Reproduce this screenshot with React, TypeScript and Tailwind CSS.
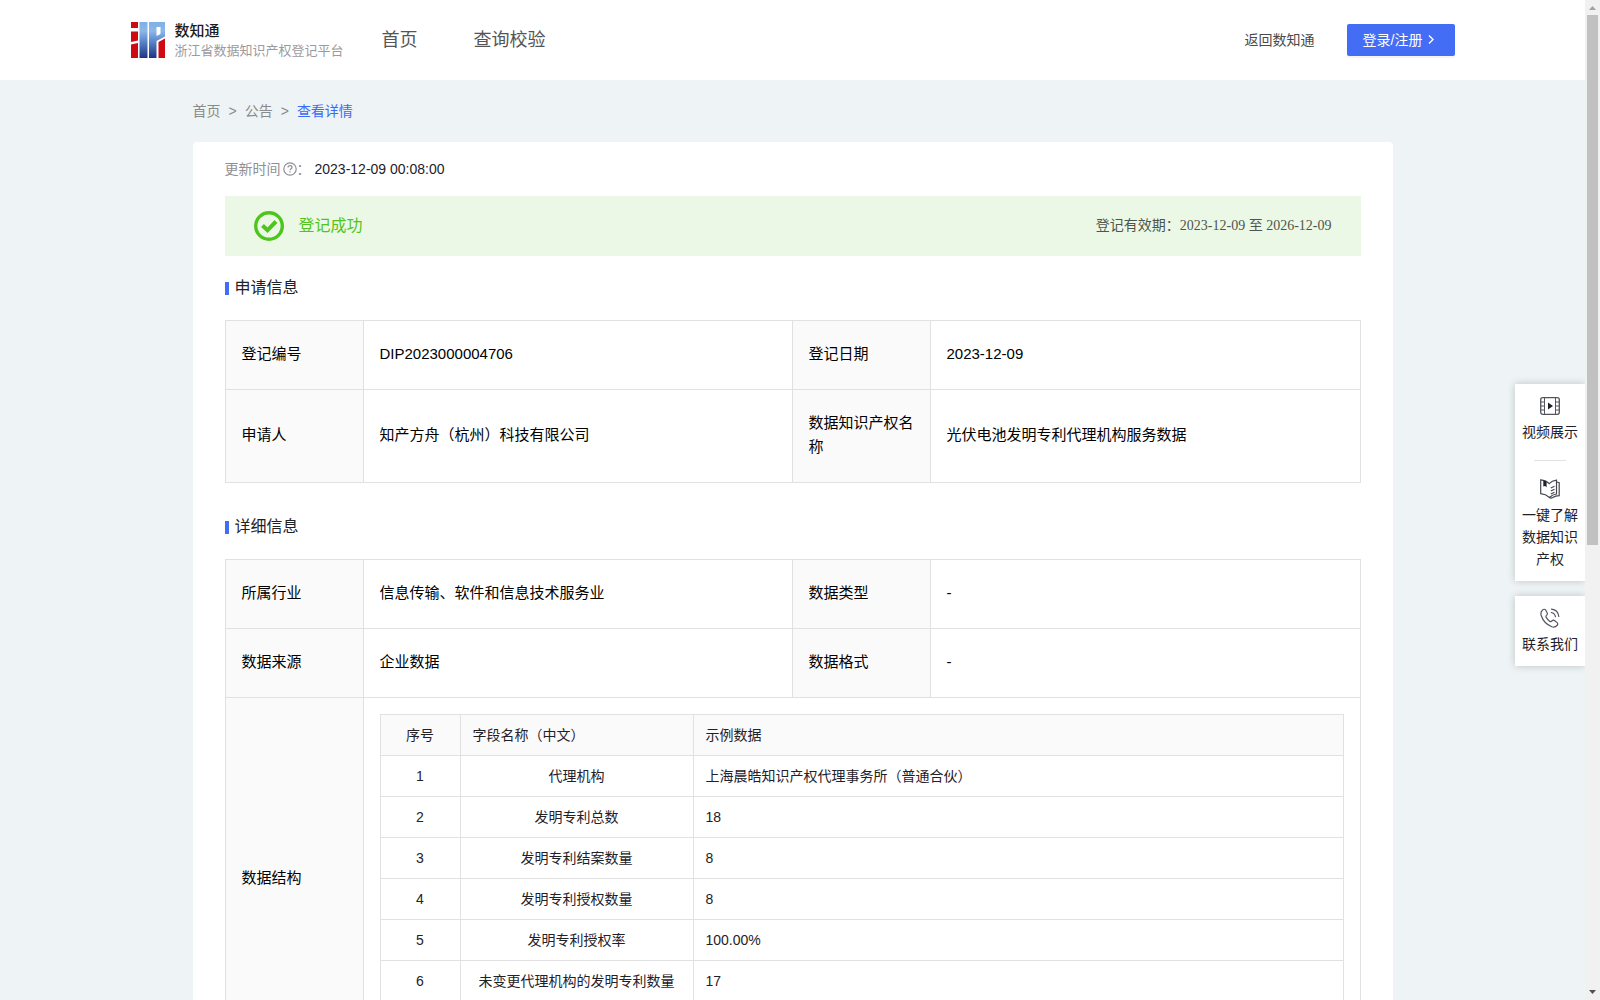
import type { ReactNode } from "react";

const cell = "border border-[#e1e1e1]";
const labelCell = "border border-[#e1e1e1] bg-[#fafafa] px-4 pb-[23px] pt-[21px] text-left align-middle font-normal";
const valueCell = "border border-[#e1e1e1] px-4 pb-[23px] pt-[21px] align-middle";

const fields = [
  ["1", "代理机构", "上海晨皓知识产权代理事务所（普通合伙）"],
  ["2", "发明专利总数", "18"],
  ["3", "发明专利结案数量", "8"],
  ["4", "发明专利授权数量", "8"],
  ["5", "发明专利授权率", "100.00%"],
  ["6", "未变更代理机构的发明专利数量", "17"],
];

function Logo() {
  return (
    <svg width="34" height="36" viewBox="0 0 34 36" aria-hidden="true">
      <defs>
        <linearGradient id="logoBlue" gradientUnits="userSpaceOnUse" x1="0" y1="0" x2="0" y2="36">
          <stop offset="0" stopColor="#7fb0e6" />
          <stop offset="0.25" stopColor="#8db7e8" />
          <stop offset="0.5" stopColor="#5f8ed0" />
          <stop offset="1" stopColor="#1d3385" />
        </linearGradient>
      </defs>
      <path fill="#cf0a12" d="M0 0h7v6H0zM0 9.500h7v9L0 20zM0 22.500L7 21v15H0z" />
      <path fill="url(#logoBlue)" d="M8.500 0h8v36h-8z" />
      <path fill="url(#logoBlue)" fillRule="evenodd" d="M18 0h16v14.500L25.500 19v17H18zM25.500 5v9l4-2V5z" />
      <path fill="#cf0a12" d="M27.500 20L34 16.500V36h-6.500z" />
    </svg>
  );
}

function VideoIcon() {
  return (
    <svg width="20" height="20" viewBox="0 0 20 20" fill="none" stroke="#54545c" aria-hidden="true">
      <rect x="0.7" y="1.700" width="18.600" height="16.600" rx="2" strokeWidth="1.300" />
      <path d="M4.500 2v16M15.500 2v16M1 6h3.500M1 10h3.500M1 14h3.500M15.500 6H19M15.500 10H19M15.500 14H19" />
      <path d="M8 6.500v7l5-3.500z" fill="#1f2129" stroke="none" />
    </svg>
  );
}

function BookIcon() {
  return (
    <svg width="20" height="20" viewBox="0 0 20 20" fill="none" stroke="#45464f" strokeWidth="1.200" aria-hidden="true">
      <path d="M9.200 4.600C7 2.300 4 1.200.7.900v13.800c3.400.3 6.200 1.500 8.800 3.800 1.900-2.100 4.200-3.200 7-3.500V1.200c-2.900.3-5.400 1.400-7.300 3.400z" />
      <path d="M16.700 3l2.500.6v13c-2.500 0-4.500.6-6.500 2-1.200.8-2.200.7-3.200-.1" />
      <path d="M10.800 9l3.700-1.700M10.800 12l3.700-1.700M10.800 15l3.700-1.700" />
      <path d="M3.300 1.200l3.300 1.100v6L5 7 3.300 7.500z" fill="#1f2129" stroke="none" />
    </svg>
  );
}

function PhoneIcon() {
  return (
    <svg width="20" height="20" viewBox="0 0 20 20" fill="none" stroke="#54545c" strokeWidth="1.200" strokeLinecap="round" aria-hidden="true">
      <path d="M5.800 2.200C4.800.9 3.600 1 2.400 2.200.9 3.600.5 5.200 1.200 7.500c1.700 5.300 5.500 9.200 10.600 11.200 2 .7 3.800.3 5.200-1.200 1-1.100 1-2.200-.1-3.100l-2.200-1.700c-1-.8-1.900-.6-2.900.3-.8.8-1.400.8-2.200.2-1.500-1.200-2.600-2.500-3.400-3.800-.5-.8-.4-1.400.3-2 1.100-1 1.200-1.900.5-2.900z" />
      <path d="M11.300 4.500c2.200.4 3.700 1.900 4.100 4.200M11.500 1.200c4.200.5 6.800 3.100 7.300 7.300" />
    </svg>
  );
}

function SectionTitle({ children }: { children: ReactNode }) {
  return (
    <h2 className="flex h-6 items-center text-base leading-6 text-[#1f2129]">
      <span className="mr-[6px] h-[13px] w-1 bg-[#446df6]" />
      {children}
    </h2>
  );
}

function Columns() {
  return (
    <colgroup>
      <col className="w-[138px]" />
      <col className="w-[429px]" />
      <col className="w-[138px]" />
      <col />
    </colgroup>
  );
}

function InfoRow({ items }: { items: [string, string, string, string] }) {
  return (
    <tr>
      <th scope="row" className={labelCell}>{items[0]}</th>
      <td className={valueCell}>{items[1]}</td>
      <th scope="row" className={labelCell}>{items[2]}</th>
      <td className={valueCell}>{items[3]}</td>
    </tr>
  );
}

function Header() {
  return (
    <header className="bg-white">
      <div className="mx-auto flex h-20 max-w-[1324px] items-center">
        <a href="#" className="flex items-center gap-[10px]">
          <Logo />
          <span className="flex flex-col pt-px">
            <span className="text-[15px] font-medium leading-5 text-[#1c1c1c]">数知通</span>
            <span className="text-[13px] leading-5 text-[#9b9b9f]">浙江省数据知识产权登记平台</span>
          </span>
        </a>
        <nav className="ml-[38px] flex gap-14 text-lg leading-6 text-[#555]">
          <a href="#">首页</a>
          <a href="#">查询校验</a>
        </nav>
        <a href="#" className="ml-auto text-sm text-[#4a4a4a]">返回数知通</a>
        <button className="ml-8 flex h-8 w-[108px] items-center rounded-[2px] bg-[#446df6] pl-4 text-sm text-white shadow-[0_2px_0_rgba(0,0,0,0.045)]">
          登录/注册
          <svg className="ml-[3px]" width="12" height="12" viewBox="0 0 12 12" fill="none" stroke="currentColor" strokeWidth="1.400" aria-hidden="true">
            <path d="M4 1.500L8 5.500l-4 4" />
          </svg>
        </button>
      </div>
    </header>
  );
}

function FloatingTools() {
  return (
    <aside className="absolute right-0 top-96 flex w-[70px] flex-col gap-[15px] text-center text-sm leading-[22px] text-[#1f2129]">
      <div className="flex flex-col items-center bg-white px-[7px] pb-[11px] pt-3 shadow-[0_0_8px_rgba(0,0,0,0.2)]">
        <a href="#" className="flex flex-col items-center gap-[5px]">
          <VideoIcon />
          视频展示
        </a>
        <hr className="mb-[18px] mt-[17px] w-8 border-[#e1e1e1]" />
        <a href="#" className="flex flex-col items-center gap-[5px]">
          <BookIcon />
          一键了解数据知识产权
        </a>
      </div>
      <a href="#" className="flex flex-col items-center gap-[5px] bg-white px-[7px] pb-[11px] pt-3 shadow-[0_0_8px_rgba(0,0,0,0.2)]">
        <PhoneIcon />
        联系我们
      </a>
    </aside>
  );
}

function ScrollTrack() {
  return (
    <div className="flex w-[15px] shrink-0 flex-col items-center bg-[#f1f1f1]" aria-hidden="true">
      <svg className="shrink-0" width="15" height="15" viewBox="0 0 15 15"><path d="M4 10h7L7.500 6z" fill="#a3a3a3" /></svg>
      <div className="h-[530px] w-[11px] bg-[#c1c1c1]" />
      <svg className="mt-auto shrink-0" width="15" height="15" viewBox="0 0 15 15"><path d="M4 5h7L7.500 9z" fill="#505050" /></svg>
    </div>
  );
}

export default function App() {
  return (
    <div className="flex h-screen font-['Liberation_Sans','Noto_Sans_CJK_SC',sans-serif]">
      <div className="relative min-w-0 flex-1 overflow-hidden bg-[#eef3f6]">
        <Header />
        <main className="mx-auto max-w-[1200px]">
          <nav className="flex h-[62px] items-center gap-2 pb-px text-sm text-[#8a8a8a]">
            <a href="#">首页</a>
            <span>&gt;</span>
            <a href="#">公告</a>
            <span>&gt;</span>
            <a href="#" className="text-[#3b6af5]">查看详情</a>
          </nav>
          <section className="rounded bg-white px-8 pb-8 pt-4">
            <p className="flex h-[22px] items-center text-sm text-[#8f9094]">
              更新时间
              <svg className="ml-[2px]" width="14" height="14" viewBox="0 0 14 14" fill="none" stroke="#8f9094" strokeWidth="1.200" aria-hidden="true">
                <circle cx="7" cy="7" r="6.200" />
                <path d="M5 5.600C5 4.300 5.900 3.700 7 3.700s2 .7 2 1.700C9 6.700 7 6.700 7 8.300M7 9.300v1.200" />
              </svg>
              ：
              <time className="ml-1 text-[#1f2129]">2023-12-09 00:08:00</time>
            </p>
            <div className="mt-4 flex h-[60px] items-center bg-[#ebf8e6] px-[29px]">
              <svg width="30" height="30" viewBox="0 0 30 30" fill="none" stroke="#4ec51c" aria-hidden="true">
                <circle cx="15" cy="15" r="13.300" strokeWidth="3.400" />
                <path d="M8.500 14.500l5 4.800L22 10.500" strokeWidth="4" />
              </svg>
              <span className="ml-[15px] text-base text-[#52c41a]">登记成功</span>
              <span className="ml-auto font-['Liberation_Serif','Noto_Sans_CJK_SC',serif] text-sm text-[#4f554d]">
                登记有效期：2023-12-09 至 2026-12-09
              </span>
            </div>
            <div className="mt-5">
              <SectionTitle>申请信息</SectionTitle>
            </div>
            <table className="mt-5 w-full table-fixed border-collapse text-[15px] leading-6 text-black">
              <Columns />
              <tbody>
                <InfoRow items={["登记编号", "DIP2023000004706", "登记日期", "2023-12-09"]} />
                <InfoRow items={["申请人", "知产方舟（杭州）科技有限公司", "数据知识产权名称", "光伏电池发明专利代理机构服务数据"]} />
              </tbody>
            </table>
            <div className="mt-8">
              <SectionTitle>详细信息</SectionTitle>
            </div>
            <table className="mt-5 w-full table-fixed border-collapse text-[15px] leading-6 text-black">
              <Columns />
              <tbody>
                <InfoRow items={["所属行业", "信息传输、软件和信息技术服务业", "数据类型", "-"]} />
                <InfoRow items={["数据来源", "企业数据", "数据格式", "-"]} />
                <tr>
                  <th scope="row" className={labelCell}>数据结构</th>
                  <td colSpan={3} className="border border-[#e1e1e1] px-4 pb-[57px] pt-4">
                    <table className="w-full table-fixed border-collapse text-sm leading-6 text-[#1f2129]">
                      <colgroup>
                        <col className="w-20" />
                        <col className="w-[233px]" />
                        <col />
                      </colgroup>
                      <thead>
                        <tr className="bg-[#fafafa] text-left">
                          <th className={`${cell} px-3 py-2 text-center font-normal`}>序号</th>
                          <th className={`${cell} px-3 py-2 font-normal`}>字段名称（中文）</th>
                          <th className={`${cell} px-3 py-2 font-normal`}>示例数据</th>
                        </tr>
                      </thead>
                      <tbody>
                        {fields.map(([no, name, sample]) => (
                          <tr key={no}>
                            <td className={`${cell} px-3 py-2 text-center`}>{no}</td>
                            <td className={`${cell} px-3 py-2 text-center`}>{name}</td>
                            <td className={`${cell} px-3 py-2`}>{sample}</td>
                          </tr>
                        ))}
                      </tbody>
                    </table>
                  </td>
                </tr>
              </tbody>
            </table>
          </section>
        </main>
        <FloatingTools />
      </div>
      <ScrollTrack />
    </div>
  );
}
